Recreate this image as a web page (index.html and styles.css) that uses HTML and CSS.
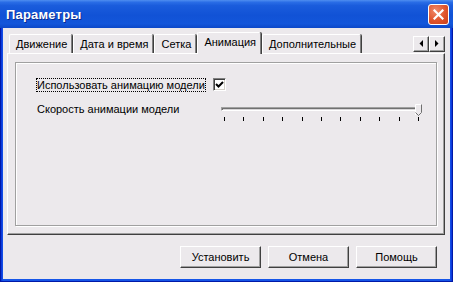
FILE: index.html
```html
<!DOCTYPE html>
<html lang="ru">
  <head>
    <meta charset="UTF-8" />
    <title>Параметры</title>
    <link rel="stylesheet" href="styles.css">
  </head>
  <body>
    <div class="window">
      <div class="titlebar">
        <span class="title">Параметры</span>
        <span class="close">
          <svg width="11" height="11" viewBox="0 0 11 11">
            <path d="M1.5 1.5 L9.5 9.5 M9.5 1.5 L1.5 9.5" stroke="#fff" stroke-width="2.2" stroke-linecap="square" />
          </svg>
        </span>
      </div>

      <div class="client">
        <!-- Tabs -->
        <div class="tabstrip">
          <div class="tabs">
            <div class="tab">Движение</div>
            <div class="tab">Дата и время</div>
            <div class="tab">Сетка</div>
            <div class="tab active">Анимация</div>
            <div class="tab">Дополнительные</div>
          </div>
          <div class="scroll">
            <span class="arrow">
              <svg width="4" height="7" viewBox="0 0 4 7"><path d="M4 0 V7 L0.5 3.5 Z" fill="#000" /></svg>
            </span>
            <span class="arrow">
              <svg width="4" height="7" viewBox="0 0 4 7"><path d="M0 0 V7 L3.5 3.5 Z" fill="#000" /></svg>
            </span>
          </div>
        </div>

        <!-- Tab page -->
        <div class="panel">
          <div class="group">
            <div class="check-row">
              <span class="focus">Использовать анимацию модели</span>
              <span class="checkbox">
                <svg width="9" height="9" viewBox="0 0 9 9">
                  <path d="M1 4 L3.5 6.5 L8 2" fill="none" stroke="#000" stroke-width="2" />
                </svg>
              </span>
            </div>
            <div class="slider-row">
              <span class="label">Скорость анимации модели</span>
              <div class="slider">
                <div class="track"></div>
                <svg class="thumb" width="7" height="12" viewBox="0 0 7 12">
                  <path d="M0.5 11 V0.5 H6.5" fill="none" stroke="#fff" />
                  <path d="M0.5 8.5 L3.5 11.5 L6.5 8.5 V0.5" fill="none" stroke="#707070" />
                  <path d="M1 1 H6 V8.3 L3.5 10.8 L1 8.3 Z" fill="#ece9ec" />
                </svg>
                <div class="ticks">
                  <i></i><i></i><i></i><i></i><i></i><i></i><i></i><i></i><i></i><i></i><i></i>
                </div>
              </div>
            </div>
          </div>
        </div>

        <!-- Dialog buttons -->
        <div class="buttons">
          <button class="btn">Установить</button>
          <button class="btn">Отмена</button>
          <button class="btn">Помощь</button>
        </div>
      </div>
    </div>
  </body>
</html>
```

FILE: styles.css
```css
* {
  margin: 0;
  padding: 0;
  box-sizing: border-box;
}

body {
  background: #ffffff;
  font-family: "Liberation Sans", Arial, sans-serif;
  font-size: 11px;
  color: #000;
}

/* Window frame */
.window {
  width: 453px;
  height: 282px;
  display: flex;
  flex-direction: column;
  background: linear-gradient(to right, #0831d9, #1656e8 2px, #1656e8 calc(100% - 2px), #0831d9);
  border: 1px solid #0019a8;
  border-top: none;
}

.titlebar {
  height: 28px;
  display: flex;
  align-items: center;
  justify-content: space-between;
  padding: 0 4px 0 6px;
  margin: 0 -1px;
  background: linear-gradient(to bottom, #4f8ef0 0%, #2a6de6 8%, #1a5cdc 20%, #1152d6 55%, #1356da 85%, #0c48c8 100%);
}

.title {
  color: #fff;
  font-size: 13px;
  font-weight: bold;
  text-shadow: 1px 1px #0b2b8f;
  letter-spacing: 0.2px;
}

.close {
  width: 21px;
  height: 21px;
  display: flex;
  align-items: center;
  justify-content: center;
  border: 1px solid #fff;
  border-radius: 3px;
  background: radial-gradient(circle at 35% 30%, #f08a6a, #e0542c 55%, #c8401c);
}

/* Client area */
.client {
  flex: 1;
  margin: 0 2px 2px 2px;
  padding: 4px 4px 0 4px;
  background: #ece9ec;
  display: flex;
  flex-direction: column;
}

/* Tabs */
.tabstrip {
  height: 21px;
  display: flex;
  align-items: flex-end;
  justify-content: space-between;
  padding-left: 2px;
  position: relative;
  z-index: 1;
}

.tabs {
  display: flex;
  align-items: flex-end;
}

.tab {
  height: 19px;
  padding: 3px 4px 0 6px;
  margin-right: 1px;
  border: 1px solid #fff;
  border-bottom: none;
  border-right: 1px solid #808080;
  border-radius: 2px 2px 0 0;
  box-shadow: 1px 0 #404040;
  line-height: 13px;
  white-space: nowrap;
}

.tab.active {
  height: 22px;
  margin-bottom: -1px;
  padding-top: 3px;
  background: #ece9ec;
}

.scroll {
  display: flex;
  align-self: center;
  margin: 2px 1px 0 0;
}

.arrow {
  width: 16px;
  height: 16px;
  display: flex;
  align-items: center;
  justify-content: center;
  border: 1px solid;
  border-color: #fff #404040 #404040 #fff;
  box-shadow: inset -1px -1px #a0a0a0;
  background: #ece9ec;
}

.panel {
  height: 182px;
  margin-right: 1px;
  padding: 8px 7px 8px 7px;
  border: 1px solid;
  border-color: #fff #404040 #404040 #fff;
  box-shadow: inset -1px -1px #a0a0a0;
}

/* Group box */
.group {
  height: 100%;
  padding: 15px 0 0 21px;
  border: 1px solid #a0a0a0;
  box-shadow: inset 1px 1px #fff, 1px 1px #fff;
}

.check-row {
  display: flex;
  align-items: center;
  height: 13px;
  gap: 8px;
}

.focus {
  outline: 1px dotted #000;
  line-height: 12px;
}

.checkbox {
  width: 13px;
  height: 13px;
  display: flex;
  align-items: center;
  justify-content: center;
  background: #fff;
  border: 1px solid;
  border-color: #808080 #fff #fff #808080;
  box-shadow: inset 1px 1px #404040, inset -1px -1px #d4d0c8;
}

.slider-row {
  display: flex;
  margin-top: 12px;
}

.label {
  width: 184px;
  line-height: 13px;
}

/* Trackbar */
.slider {
  position: relative;
  width: 201px;
  height: 19px;
  margin-top: 1px;
}

.track {
  margin-top: 3px;
  height: 4px;
  border: 1px solid;
  border-color: #a0a0a0 #fff #fff #a0a0a0;
  box-shadow: inset 1px 1px #707070;
  background: #d8d6d8;
}

.thumb {
  position: absolute;
  top: 0;
  left: 194px;
}

.ticks {
  display: flex;
  justify-content: space-between;
  margin: 6px 3px 0 3px;
}

.ticks i {
  width: 1px;
  height: 4px;
  background: #000;
}

/* Dialog buttons */
.buttons {
  display: flex;
  justify-content: flex-end;
  gap: 7px;
  margin-top: 11px;
  padding-right: 9px;
}

.btn {
  width: 81px;
  height: 22px;
  font-family: "Liberation Sans", Arial, sans-serif;
  font-size: 11px;
  color: #000;
  background: #ece9ec;
  border: 1px solid;
  border-color: #fff #404040 #404040 #fff;
  box-shadow: inset -1px -1px #a0a0a0;
}
```
